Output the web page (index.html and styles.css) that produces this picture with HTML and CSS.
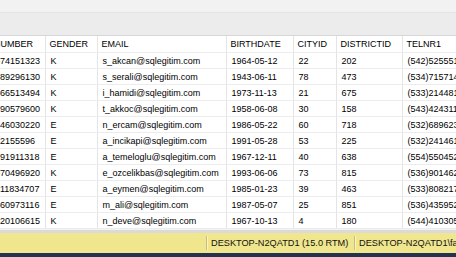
FILE: index.html
```html
<!DOCTYPE html>
<html lang="en">
<head>
    <meta charset="UTF-8">
    <title>Results</title>
    <link rel="stylesheet" href="styles.css">
</head>
<body>
    <div class="window">
        <div class="toolbar"></div>
        <div class="tabs"></div>

        <!-- Results grid, scrolled a little to the right -->
        <div class="grid">
            <table>
                <colgroup>
                    <col class="c-num"><col class="c-gender"><col class="c-email"><col class="c-birth"><col class="c-city"><col class="c-district"><col class="c-tel">
                </colgroup>
                <thead>
                    <tr><th>NUMBER</th><th>GENDER</th><th>EMAIL</th><th>BIRTHDATE</th><th>CITYID</th><th>DISTRICTID</th><th>TELNR1</th></tr>
                </thead>
                <tbody>
                    <tr><td>574151323</td><td>K</td><td>s_akcan@sqlegitim.com</td><td>1964-05-12</td><td>22</td><td>202</td><td>(542)5255512</td></tr>
                    <tr><td>589296130</td><td>K</td><td>s_serali@sqlegitim.com</td><td>1943-06-11</td><td>78</td><td>473</td><td>(534)7157148</td></tr>
                    <tr><td>566513494</td><td>K</td><td>i_hamidi@sqlegitim.com</td><td>1973-11-13</td><td>21</td><td>675</td><td>(533)2144815</td></tr>
                    <tr><td>590579600</td><td>K</td><td>t_akkoc@sqlegitim.com</td><td>1958-06-08</td><td>30</td><td>158</td><td>(543)4243115</td></tr>
                    <tr><td>546030220</td><td>E</td><td>n_ercam@sqlegitim.com</td><td>1986-05-22</td><td>60</td><td>718</td><td>(532)6896232</td></tr>
                    <tr><td>52155596</td><td>E</td><td>a_incikapi@sqlegitim.com</td><td>1991-05-28</td><td>53</td><td>225</td><td>(532)2414617</td></tr>
                    <tr><td>591911318</td><td>E</td><td>a_temeloglu@sqlegitim.com</td><td>1967-12-11</td><td>40</td><td>638</td><td>(554)5504521</td></tr>
                    <tr><td>570496920</td><td>K</td><td>e_ozcelikbas@sqlegitim.com</td><td>1993-06-06</td><td>73</td><td>815</td><td>(536)9014623</td></tr>
                    <tr><td>511834707</td><td>E</td><td>a_eymen@sqlegitim.com</td><td>1985-01-23</td><td>39</td><td>463</td><td>(533)8082171</td></tr>
                    <tr><td>560973116</td><td>E</td><td>m_ali@sqlegitim.com</td><td>1987-05-07</td><td>25</td><td>851</td><td>(536)4359523</td></tr>
                    <tr><td>520106615</td><td>K</td><td>n_deve@sqlegitim.com</td><td>1967-10-13</td><td>4</td><td>180</td><td>(544)4103052</td></tr>
                </tbody>
            </table>
        </div>

        <div class="split"></div>

        <div class="status">
            <span class="status-item server">DESKTOP-N2QATD1 (15.0 RTM)</span>
            <span class="status-item">DESKTOP-N2QATD1\fatih (57)</span>
        </div>
        <div class="taskbar"></div>
    </div>
</body>
</html>
```

FILE: styles.css
```css
body {
    margin: 0;
    padding: 0;
    background-color: #f0f0f0;
    font-family: "Liberation Sans", Arial, sans-serif;
    font-size: 9px;
    color: #000;
    overflow: hidden;
}
.window {
    width: 456px;
    height: 257px;
    display: flex;
    flex-direction: column;
    overflow: hidden;
}
.window > div {
    flex-shrink: 0;
    box-sizing: border-box;
}
.toolbar {
    height: 13px;
    background-color: #f2f2f2;
    border-bottom: 1px solid #e4e4e4;
}
.tabs {
    height: 23px;
    background-color: #ececec;
    border-bottom: 1px solid #d6d6d6;
}
.grid {
    height: 193px;
    background-color: #fff;
    overflow: hidden;
}
table {
    margin-left: -10px;
    border-collapse: collapse;
    table-layout: fixed;
    width: 572px;
}
.c-num { width: 55px; }
.c-gender { width: 52px; }
.c-email { width: 129px; }
.c-birth { width: 67px; }
.c-city { width: 43px; }
.c-district { width: 66px; }
.c-tel { width: 160px; }
th, td {
    height: 15px;
    padding: 1px 0 0 5px;
    box-sizing: border-box;
    border-right: 1px solid #e4e4e4;
    border-bottom: 1px solid #ececec;
    text-align: left;
    font-weight: normal;
    white-space: nowrap;
    overflow: hidden;
    line-height: 14px;
}
th {
    height: 16px;
    padding-left: 4px;
}
td {
    height: 16px;
}
.split {
    height: 4px;
    background-color: #dadada;
    border-top: 1px solid #f3f3f3;
}
.status {
    height: 20px;
    background-color: #f0e68e;
    display: flex;
    align-items: center;
    padding-left: 206px;
    white-space: nowrap;
}
.status-item {
    height: 14px;
    line-height: 14px;
    padding-left: 4px;
    border-left: 1px solid #c8bd7a;
    box-shadow: inset 1px 0 0 #fbf5c4;
    font-size: 9.2px;
    color: #111;
}
.server {
    width: 143px;
    flex-shrink: 0;
}
.taskbar {
    flex: 1;
    background-color: #24324f;
}
```
